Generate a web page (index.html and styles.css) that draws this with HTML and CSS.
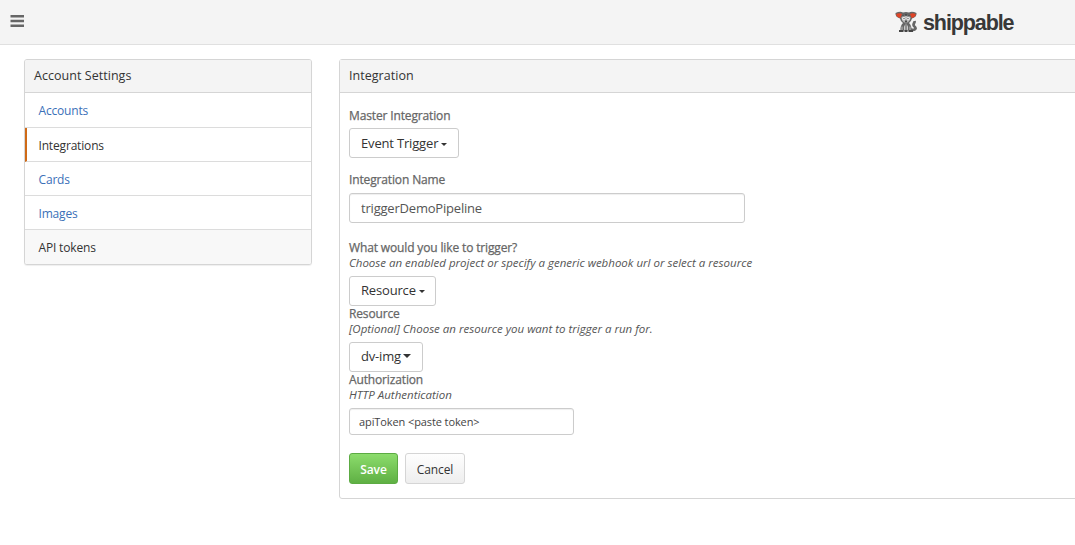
FILE: index.html
```html
<!DOCTYPE html>
<html lang="en">
<head>
<meta charset="utf-8">
<title>Shippable – Account Settings</title>
<link rel="stylesheet" href="styles.css">
</head>
<body>
<header class="topbar">
  <svg class="menu-icon" width="15" height="12" viewBox="0 0 15 12"><path d="M.5 0H14v2.500H.5zM.5 4.700H14v2.500H.5zM.5 9.400H14v2.500H.5z" fill="#666"/></svg>
  <div class="brand">
    <svg class="mascot" width="22" height="22" viewBox="0 0 22 22">
      <path d="M16 18.500c5 1 5.500-1.500 3-3.500-1.500-2 1-3 .5-5" fill="none" stroke="#666" stroke-width="2.800"/>
      <path d="M.5 2Q5 0 8 1.500q3-1 6 0Q17 0 21.500 2q.5 4-4.500 5.500-1 3.500-3 4.500 3 3 2.500 7.500h-11Q5 15 8 12 5.500 10.500 5 7.500 0 6 .5 2z" fill="#666"/>
      <path d="M1.200 3Q4.500 1.500 7 3L5.400 7Q1.400 6.500 1.200 3zM20.800 3Q17.500 1.500 15 3L16.600 7q4-.5 4.200-4z" fill="#e04427"/>
      <path d="M6.500 6q4.500-3 9 0 0 4-4.500 6.500Q6 10 6.500 6z" fill="#bbb"/>
      <path d="M8 4.500l1 1M14 4.500l-1 1M11 3v2" stroke="#333"/>
      <circle cx="8.800" cy="7.600" r="1.600" fill="#eee"/><circle cx="13.200" cy="7.600" r="1.600" fill="#eee"/>
      <circle cx="9" cy="7.600" r=".7" fill="#444"/><circle cx="13" cy="7.600" r=".7" fill="#444"/>
      <path d="M11 8.500l1.500 3h-3z" fill="#444"/>
      <path d="M11 13q3 2 1.800 6H9.200Q8 15 11 13z" fill="#ccc"/>
      <path d="M7 15.500v4M15 15.500v4" stroke="#ccc" stroke-width=".9"/>
      <path d="M11 13.500v5.500" stroke="#444" stroke-width=".9"/>
      <path d="M4 20h4.500M9.500 20h3M13.500 20H18" stroke="#444" stroke-width="1.800"/>
    </svg>
    <span class="wordmark">shippable</span>
  </div>
</header>
<main class="page">
  <nav class="panel sidebar">
    <h2 class="panel-title">Account Settings</h2>
    <a class="nav-item">Accounts</a>
    <a class="nav-item active">Integrations</a>
    <a class="nav-item">Cards</a>
    <a class="nav-item">Images</a>
    <a class="nav-item hovered">API tokens</a>
  </nav>
  <section class="panel content">
    <h2 class="panel-title">Integration</h2>
    <form class="form">
      <div class="field master">
        <label class="label">Master Integration</label>
        <button type="button" class="dropdown trigger">Event Trigger<i class="caret"></i></button>
      </div>
      <div class="field name">
        <label class="label">Integration Name</label>
        <input class="input" value="triggerDemoPipeline">
      </div>
      <div class="field">
        <label class="label">What would you like to trigger?</label>
        <p class="hint">Choose an enabled project or specify a generic webhook url or select a resource</p>
        <button type="button" class="dropdown raised resource">Resource<i class="caret"></i></button>
      </div>
      <div class="field">
        <label class="label tight">Resource</label>
        <p class="hint">[Optional] Choose an resource you want to trigger a run for.</p>
        <button type="button" class="dropdown raised image">dv-img<i class="caret large"></i></button>
      </div>
      <div class="field">
        <label class="label tight">Authorization</label>
        <p class="hint">HTTP Authentication</p>
        <input class="input small" value="apiToken &lt;paste token&gt;">
      </div>
      <div class="actions">
        <button type="button" class="btn save">Save</button>
        <button type="button" class="btn cancel">Cancel</button>
      </div>
    </form>
  </section>
</main>
</body>
</html>
```

FILE: styles.css
```css
* { box-sizing: border-box; }
body { margin: 0; background: #fff; color: #333; font: 12.5px/18px "Open Sans", sans-serif; overflow: hidden; }
.topbar { height: 45px; background: #f4f4f4; border-bottom: 1px solid #e0e0e0; display: flex; justify-content: space-between; padding: 0 61px 0 10px; }
.menu-icon { margin-top: 15px; }
.brand { display: flex; }
.mascot { margin: 11px 6px 0 0; }
.wordmark { font: bold 21.5px/26px "Liberation Sans", Arial, sans-serif; letter-spacing: -1.1px; color: #383838; margin-top: 10px; width: 91px; white-space: nowrap; }
.page { display: flex; align-items: flex-start; gap: 27px; padding: 14px 0 0 24px; }
.panel { border: 1px solid #d5d5d5; border-radius: 3px; background: #fff; flex: none; }
.panel-title { height: 33px; margin: 0; padding: 0 9px; background: #f4f4f4; border-bottom: 1px solid #d5d5d5; font-size: 12.5px; line-height: 32px; font-weight: 400; letter-spacing: .04px; }
.sidebar { width: 288px; height: 206px; overflow: hidden; box-shadow: 0 1px 1px #0001; }
.nav-item { display: block; height: 34px; padding-left: 13.5px; line-height: 35px; font-size: 12px; letter-spacing: -.17px; color: #3b70b8; border-bottom: 1px solid #dcdcdc; }
.nav-item:nth-of-type(1) { height: 35px; line-height: 36px; }
.nav-item.active { color: #333; border-left: 2px solid #cf6a17; padding-left: 11.5px; }
.nav-item.hovered { color: #333; background: #f8f8f8; height: 35px; border-bottom: 0; }
.content { width: 740px; height: 440px; }
.form { padding: 14px 9px 0; }
.field { display: flex; flex-direction: column; align-items: flex-start; }
.label { color: #666; font-size: 12px; line-height: 18px; height: 18px; letter-spacing: -.14px; -webkit-text-stroke: .25px #666; }
.label.tight { height: 17px; line-height: 16px; }
.hint { margin: -2px 0 6px; height: 15px; font-size: 11.5px; line-height: 15px; font-style: italic; color: #555; white-space: nowrap; }
.dropdown { display: flex; align-items: center; height: 30px; padding: 0 11px; border: 1px solid #ccc; border-radius: 3px; background: #fff; color: #333; font: 13px/28px "Open Sans", sans-serif; letter-spacing: -.17px; white-space: nowrap; }
.dropdown.raised { padding-bottom: 2px; }
.caret { width: 0; height: 0; margin: 2px 0 0 3px; border: 3px solid transparent; border-top-color: #333; border-bottom: 0; flex: none; }
.caret.large { border-width: 4px 4px 0; margin: 0 0 0 2px; }
.master { padding-bottom: 13px; }
.master .label { margin-bottom: 3px; }
.trigger { width: 110px; }
.resource { width: 87px; }
.image { width: 74px; }
.name .label { margin-bottom: 4px; }
.name { padding-bottom: 16px; }
.input { width: 396px; height: 30px; padding: 0 11px; border: 1px solid #ccc; border-radius: 3px; background: #fff; color: #555; font: 13px "Open Sans", sans-serif; letter-spacing: -.2px; box-shadow: inset 0 1px 1px #0001; }
.input.small { width: 225px; height: 27px; padding: 0 9px; font-size: 11px; letter-spacing: -.1px; color: #444; }
.actions { display: flex; gap: 7px; padding-top: 18px; }
.btn { height: 31px; padding: 2px 0 0; border-radius: 3px; font: 12px/27px "Open Sans", sans-serif; letter-spacing: -.1px; }
.save { width: 49px; border: 1px solid #5cab43; background: linear-gradient(#8cdc6c, #5fb044); color: #fff; font-weight: 600; }
.cancel { width: 60px; border: 1px solid #d5d5d5; background: linear-gradient(#fefefe, #eee); color: #333; }
```
